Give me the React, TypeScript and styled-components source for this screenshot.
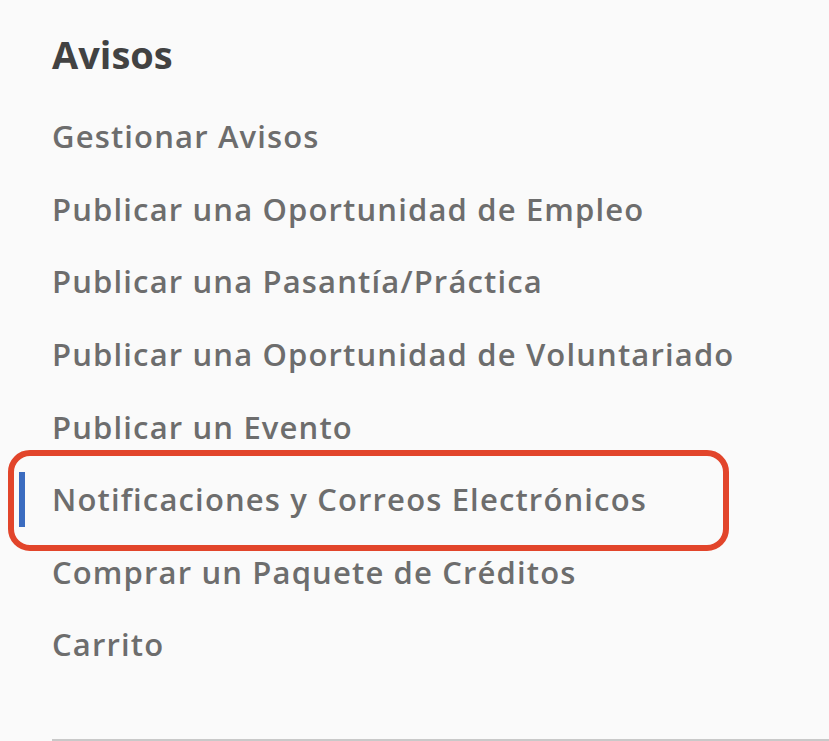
import React from "react";
import styled, { createGlobalStyle } from "styled-components";

const Global = createGlobalStyle`
  html, body { margin: 0; padding: 0; background: #fafafa; }
  body { font-family: "Open Sans", "Noto Sans", sans-serif; overflow: hidden; }
`;

const Page = styled.div`
  width: 829px;
  height: 741px;
  background: #fafafa;
  overflow: hidden;
`;

const Heading = styled.h2`
  margin: 33px 0 0 52px;
  font-size: 38px;
  line-height: 42px;
  font-weight: 700;
  color: #424242;
`;

const List = styled.ul`
  list-style: none;
  margin: 25px 0 0 0;
  padding: 0 0 0 19px;
`;

const Item = styled.li<{ $active?: boolean }>`
  position: relative;
  height: 72.6px;
  display: flex;
  align-items: center;
  padding-left: 33px;
  font-size: 31px;
  font-weight: 600;
  color: #6d6d6d;
  letter-spacing: 1.15px;
  white-space: nowrap;

  ${(p) =>
    p.$active &&
    `
    &::before {
      content: "";
      position: absolute;
      left: 0;
      top: 9px;
      bottom: 9px;
      width: 6px;
      background: #3b6cc0;
    }
    &::after {
      content: "";
      position: absolute;
      left: -11px;
      top: -13px;
      right: 100px;
      bottom: -15px;
      border: 6px solid #e2452b;
      border-radius: 22px;
    }
  `}
`;

const Divider = styled.hr`
  margin: 58px 0 0 52px;
  border: none;
  height: 3px;
  background: #c9c9c9;
`;

const items = [
  "Gestionar Avisos",
  "Publicar una Oportunidad de Empleo",
  "Publicar una Pasantía/Práctica",
  "Publicar una Oportunidad de Voluntariado",
  "Publicar un Evento",
  "Notificaciones y Correos Electrónicos",
  "Comprar un Paquete de Créditos",
  "Carrito",
];

export default function App() {
  return (
    <Page>
      <Global />
      <Heading>Avisos</Heading>
      <List>
        {items.map((t, i) => (
          <Item key={t} $active={i === 5}>
            {t}
          </Item>
        ))}
      </List>
      <Divider />
    </Page>
  );
}
